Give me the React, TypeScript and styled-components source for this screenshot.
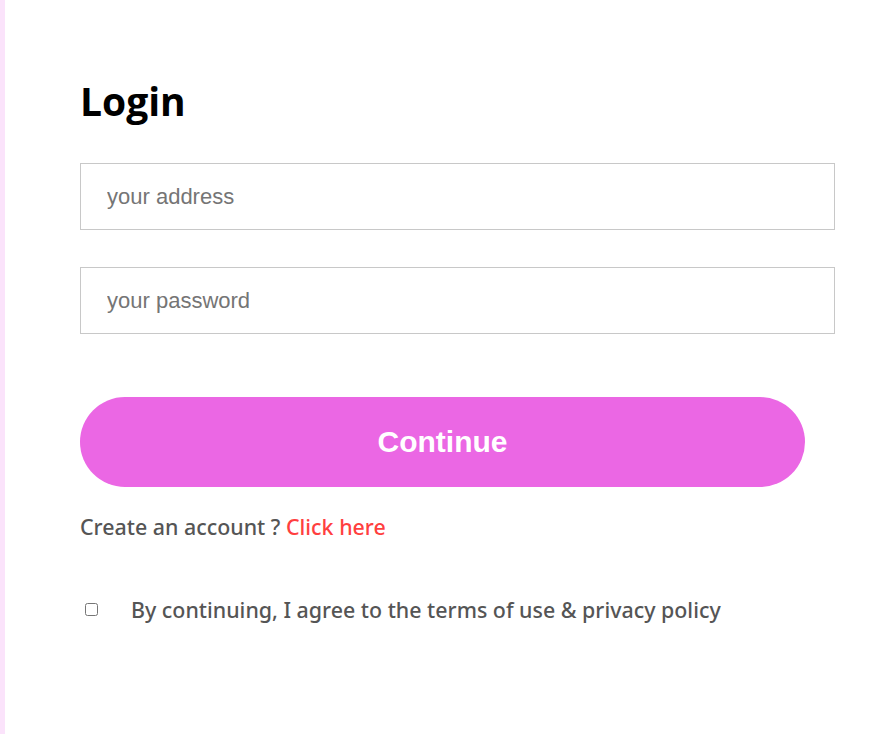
import React from "react";
import styled, { createGlobalStyle } from "styled-components";

const GlobalStyle = createGlobalStyle`
  html, body { margin: 0; padding: 0; background: #ffffff; }
  body { font-family: "Open Sans", "Noto Sans", sans-serif; }
  * { box-sizing: border-box; }
`;

const Page = styled.div`
  min-height: 734px;
  display: flex;
  background: #ffffff;
`;

const Strip = styled.div`
  width: 5px;
  flex: 0 0 5px;
  background: #fbe3fb;
`;

const Form = styled.form`
  flex: 1;
  padding: 78px 42px 0 75px;
  display: flex;
  flex-direction: column;
`;

const Title = styled.h1`
  margin: 0 0 39px;
  font-family: "Open Sans", sans-serif;
  font-weight: 700;
  font-size: 39px;
  line-height: 46px;
  color: #000;
`;

const Field = styled.input<{ $gap: number }>`
  width: 100%;
  height: 67px;
  border: 1px solid #c8c8c8;
  padding: 0 26px;
  font-family: "Liberation Sans", Arial, sans-serif;
  font-size: 22px;
  color: #333;
  outline: none;
  margin-bottom: ${(p) => p.$gap}px;
  &::placeholder { color: #757575; }
`;

const Button = styled.button`
  width: 725px;
  height: 90px;
  border: none;
  border-radius: 45px;
  background: #eb67e4;
  color: #fff;
  font-family: "Liberation Sans", Arial, sans-serif;
  font-weight: 700;
  font-size: 30px;
  cursor: pointer;
  margin-bottom: 24px;
`;

const SignupLine = styled.p`
  margin: 0 0 52px;
  font-family: "Noto Sans", "Open Sans", sans-serif;
  font-size: 21.4px;
  font-weight: 500;
  line-height: 32px;
  color: #555555;
`;

const Link = styled.a`
  color: #ff3f3f;
  text-decoration: none;
`;

const Terms = styled.label`
  display: flex;
  align-items: center;
  gap: 33px;
  font-family: "Noto Sans", "Open Sans", sans-serif;
  font-size: 21.4px;
  font-weight: 500;
  color: #555555;
`;

const Check = styled.input`
  margin: 0 0 0 5px;
  width: 13px;
  height: 13px;
`;

export default function App() {
  return (
    <>
      <GlobalStyle />
      <Page>
        <Strip />
        <Form onSubmit={(e) => e.preventDefault()}>
          <Title>Login</Title>
          <Field $gap={37} type="text" placeholder="your address" />
          <Field $gap={63} type="password" placeholder="your password" />
          <Button type="submit">Continue</Button>
          <SignupLine>
            Create an account ? <Link href="#">Click here</Link>
          </SignupLine>
          <Terms>
            <Check type="checkbox" />
            By continuing, I agree to the terms of use &amp; privacy policy
          </Terms>
        </Form>
      </Page>
    </>
  );
}
